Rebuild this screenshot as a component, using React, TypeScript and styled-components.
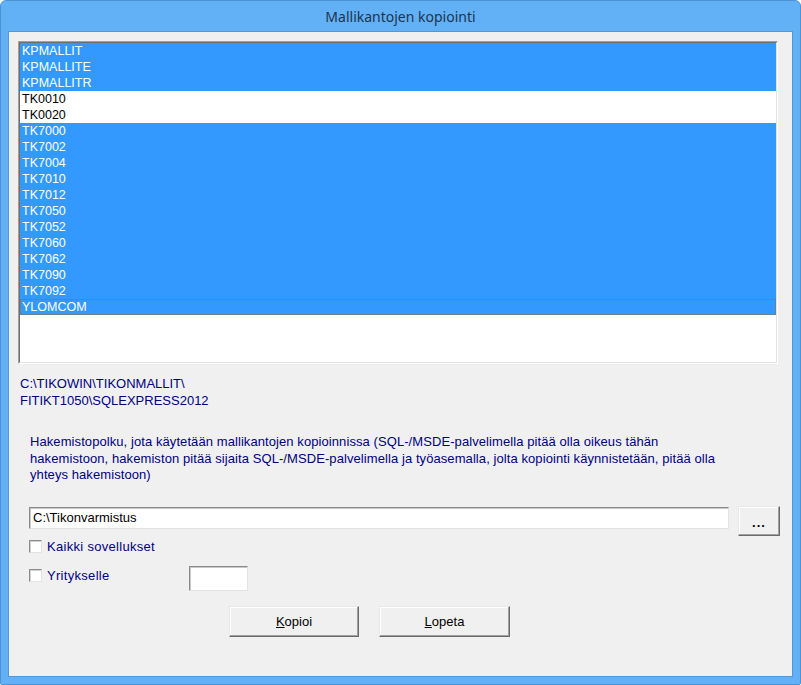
import React from "react";
import styled, { createGlobalStyle } from "styled-components";

const Global = createGlobalStyle`
  html, body { margin: 0; padding: 0; background: #ffffff; overflow: hidden; }
  * { box-sizing: border-box; }
`;

const Window = styled.div`
  width: 801px;
  height: 685px;
  display: flex;
  flex-direction: column;
  background: #62b1f6;
  border: 1px solid #4b93d4;
  border-radius: 6px 6px 2px 2px;
  padding: 0 7px 7px 7px;
`;

const TitleBar = styled.div`
  height: 30px;
  display: flex;
  align-items: center;
  justify-content: center;
  font-family: "Noto Sans", "Open Sans", sans-serif;
  font-size: 14px;
  color: #1c3450;
  padding-top: 1px;
`;

const Client = styled.div`
  flex: 1;
  background: #f0f0f0;
  border: 1px solid #4f98da;
  display: flex;
  flex-direction: column;
  padding: 9px 0 0 9px;
  font-family: "Liberation Sans", Arial, sans-serif;
  font-size: 13px;
`;

const ListOuter = styled.div`
  width: 760px;
  height: 323px;
  border: 1px solid;
  border-color: #a0a0a0 #ffffff #ffffff #a0a0a0;
`;

const ListInner = styled.div`
  height: 100%;
  border: 1px solid;
  border-color: #6e6e6e #e3e3e3 #e3e3e3 #6e6e6e;
  background: #ffffff;
  overflow: hidden;
`;

const Row = styled.div<{ $sel: boolean; $focus?: boolean }>`
  height: 16px;
  line-height: 16px;
  padding-left: 2px;
  font-size: 12.5px;
  background: ${(p) => (p.$sel ? "#3399ff" : "#ffffff")};
  color: ${(p) => (p.$sel ? "#ffffff" : "#000000")};
  white-space: nowrap;
  ${(p) => (p.$focus ? "box-shadow: inset 0 0 0 1px #6f7f92;" : "")}
`;

const PathBlock = styled.div`
  margin-top: 11px;
  margin-left: 2px;
  color: #000080;
  line-height: 17px;
`;

const Description = styled.div`
  margin-top: 25px;
  margin-left: 12px;
  color: #000080;
  line-height: 16.5px;
  letter-spacing: 0.08px;
  white-space: nowrap;
`;

const PathRow = styled.div`
  margin-top: 22px;
  margin-left: 11px;
  display: flex;
  align-items: flex-start;
  gap: 9px;
`;

const TextBox = styled.div<{ $w: number; $h: number }>`
  width: ${(p) => p.$w}px;
  height: ${(p) => p.$h}px;
  background: #ffffff;
  border: 1px solid;
  border-color: #8a8a8a #e3e3e3 #e3e3e3 #8a8a8a;
  box-shadow: inset 1px 1px 0 #c8c8c8;
  padding-left: 3px;
  display: flex;
  align-items: center;
  color: #000000;
`;

const PathBox = styled(TextBox)`
  margin-top: 1px;
`;

const Button = styled.div<{ $w: number; $h: number }>`
  width: ${(p) => p.$w}px;
  height: ${(p) => p.$h}px;
  background: #f0f0f0;
  border: 1px solid;
  border-color: #e8e8e8 #6a6a6a #6a6a6a #e8e8e8;
  box-shadow: inset -1px -1px 0 #a0a0a0, inset 1px 1px 0 #ffffff;
  display: flex;
  align-items: center;
  justify-content: center;
  color: #000000;
`;

const Dots = styled.span`
  font-weight: bold;
  font-size: 13px;
  letter-spacing: 1px;
  margin-top: 4px;
`;

const CheckRow = styled.div<{ $mt: number }>`
  margin-top: ${(p) => p.$mt}px;
  margin-left: 11px;
  display: flex;
  align-items: flex-start;
`;

const CheckLabel = styled.div<{ $w?: number }>`
  height: 18px;
  display: flex;
  align-items: center;
  gap: 5px;
  color: #000080;
  letter-spacing: 0.3px;
  ${(p) => (p.$w ? `width: ${p.$w}px;` : "")}
`;

const CheckLabel2 = styled(CheckLabel)`
  margin-top: 1px;
`;

const Box = styled.span`
  width: 13px;
  height: 13px;
  flex: none;
  background: #ffffff;
  border: 1px solid;
  border-color: #8c8c8c #e3e3e3 #e3e3e3 #8c8c8c;
  box-shadow: inset 1px 1px 0 #d0d0d0;
`;

const ButtonRow = styled.div`
  margin-top: 15px;
  margin-left: 211px;
  display: flex;
  gap: 20px;
`;

const U = styled.span`
  text-decoration: underline;
`;

const items: [string, boolean][] = [
  ["KPMALLIT", true],
  ["KPMALLITE", true],
  ["KPMALLITR", true],
  ["TK0010", false],
  ["TK0020", false],
  ["TK7000", true],
  ["TK7002", true],
  ["TK7004", true],
  ["TK7010", true],
  ["TK7012", true],
  ["TK7050", true],
  ["TK7052", true],
  ["TK7060", true],
  ["TK7062", true],
  ["TK7090", true],
  ["TK7092", true],
  ["YLOMCOM", true],
];

export default function App() {
  return (
    <>
      <Global />
      <Window>
        <TitleBar>Mallikantojen kopiointi</TitleBar>
        <Client>
          <ListOuter>
            <ListInner>
              {items.map(([name, sel], i) => (
                <Row key={name} $sel={sel} $focus={i === items.length - 1}>
                  {name}
                </Row>
              ))}
            </ListInner>
          </ListOuter>
          <PathBlock>
            C:\TIKOWIN\TIKONMALLIT\
            <br />
            FITIKT1050\SQLEXPRESS2012
          </PathBlock>
          <Description>
            Hakemistopolku, jota käytetään mallikantojen kopioinnissa (SQL-/MSDE-palvelimella pitää olla oikeus tähän
            <br />
            hakemistoon, hakemiston pitää sijaita SQL-/MSDE-palvelimella ja työasemalla, jolta kopiointi käynnistetään, pitää olla
            <br />
            yhteys hakemistoon)
          </Description>
          <PathRow>
            <PathBox $w={700} $h={22}>C:\Tikonvarmistus</PathBox>
            <Button $w={42} $h={30}>
              <Dots>...</Dots>
            </Button>
          </PathRow>
          <CheckRow $mt={2}>
            <CheckLabel>
              <Box />
              Kaikki sovellukset
            </CheckLabel>
          </CheckRow>
          <CheckRow $mt={10}>
            <CheckLabel2 $w={160}>
              <Box />
              Yritykselle
            </CheckLabel2>
            <TextBox $w={59} $h={25} />
          </CheckRow>
          <ButtonRow>
            <Button $w={130} $h={31}>
              <span>
                <U>K</U>opioi
              </span>
            </Button>
            <Button $w={131} $h={31}>
              <span>
                <U>L</U>opeta
              </span>
            </Button>
          </ButtonRow>
        </Client>
      </Window>
    </>
  );
}
